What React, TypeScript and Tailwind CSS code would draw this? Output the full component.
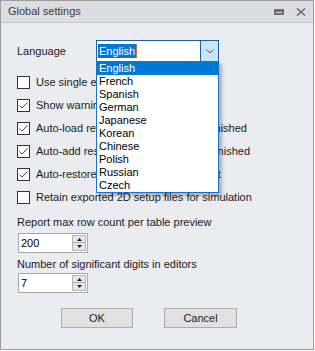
import { useState } from 'react';

const languages = ['English', 'French', 'Spanish', 'German', 'Japanese', 'Korean', 'Chinese', 'Polish', 'Russian', 'Czech'];

const options = [
  { label: 'Use single editor window', checked: false },
  { label: 'Show warnings on close', checked: true },
  { label: 'Auto-load results when simulations finished', checked: true },
  { label: 'Auto-add results when simulation is finished', checked: true },
  { label: 'Auto-restore last viewer layout at start', checked: true },
  { label: 'Retain exported 2D setup files for simulation', checked: false },
];

function Checkbox({ checked }: { checked: boolean }) {
  return (
    <div className="w-[13px] h-[13px] border border-[#333333] bg-white flex items-center justify-center shrink-0">
      {checked && (
        <svg width="11" height="11" viewBox="0 0 11 11">
          <path d="M1.5 5.5 L4 8 L9.5 2.5" fill="none" stroke="#4a4a4a" strokeWidth="1" />
        </svg>
      )}
    </div>
  );
}

function SpinBox({ value }: { value: string }) {
  return (
    <div className="w-[70px] h-[20px] border border-[#a8a8a8] bg-white flex items-center justify-between pl-[2px] pr-[1px]">
      <span className="text-[11px] leading-none text-black">{value}</span>
      <div className="flex flex-col w-[14px] h-[16px] gap-0">
        <div className="h-[8px] bg-[#e6e6e6] border border-[#b4b4b4] flex items-center justify-center">
          <svg width="5" height="3" viewBox="0 0 5 3"><path d="M0 3 L2.5 0 L5 3 Z" fill="#222" /></svg>
        </div>
        <div className="h-[8px] bg-[#e6e6e6] border border-t-0 border-[#b4b4b4] flex items-center justify-center">
          <svg width="5" height="3" viewBox="0 0 5 3"><path d="M0 0 L2.5 3 L5 0 Z" fill="#222" /></svg>
        </div>
      </div>
    </div>
  );
}

export default function App() {
  const [lang] = useState('English');

  return (
    <div className="w-[315px] h-[351px] bg-white" style={{ fontFamily: '"Liberation Sans", Arial, sans-serif' }}>
      <div className="relative w-[314px] h-[350px] border border-[#9c9c9c] bg-[#ebecf0] flex flex-col">
        {/* Title bar */}
        <div className="h-[22px] bg-[#dcdde2] border-b border-[#c4c5c9] flex items-center justify-between pl-[7px] pr-[7px] shrink-0">
          <span className="text-[11px] text-[#3a3a3a]">Global settings</span>
          <div className="flex items-center gap-[12px]">
            <div className="w-[10px] h-[6px] border-[2px] border-[#707070] border-t-[3px]" />
            <svg width="10" height="8" viewBox="0 0 10 8">
              <path d="M1 0.5 L9 7.5 M9 0.5 L1 7.5" stroke="#707070" strokeWidth="1.6" />
            </svg>
          </div>
        </div>

        <div className="flex flex-col pl-[16px] text-[11px] text-[#1a1a1a]">
          {/* Language */}
          <div className="flex items-center mt-[17px] h-[22px]">
            <span className="w-[79px]">Language</span>
            <div className="w-[123px] h-[22px] border border-[#1f5f9f] bg-white flex items-center">
              <div className="flex-1 pl-[1px] flex items-center">
                <span className="bg-[#0078d7] text-white px-[1px] leading-[14px]">{lang}</span>
                <span className="w-[1px] h-[14px] bg-[#d4782a]" />
              </div>
              <div className="w-[18px] h-full bg-[#cce4f7] border-l border-[#1f5f9f] flex items-center justify-center">
                <svg width="8" height="5" viewBox="0 0 8 5">
                  <path d="M0.5 0.5 L4 4 L7.5 0.5" fill="none" stroke="#555" strokeWidth="1" />
                </svg>
              </div>
            </div>
          </div>

          {/* Options */}
          <div className="flex flex-col mt-[9px]">
            {options.map((o) => (
              <div key={o.label} className="h-[23px] flex items-center gap-[6px]">
                <Checkbox checked={o.checked} />
                <span className="whitespace-nowrap">{o.label}</span>
              </div>
            ))}
          </div>

          <div className="mt-[6px] leading-[14px]">Report max row count per table preview</div>
          <div className="mt-[4px] pl-[1px]">
            <SpinBox value="200" />
          </div>
          <div className="mt-[4px] leading-[14px]">Number of significant digits in editors</div>
          <div className="mt-[2px] pl-[1px]">
            <SpinBox value="7" />
          </div>

          <div className="flex gap-[31px] mt-[15px] pl-[44px]">
            <button className="w-[72px] h-[20px] bg-[#e1e1e1] border border-[#adadad] text-[11px] text-[#1a1a1a]">OK</button>
            <button className="w-[73px] h-[20px] bg-[#e1e1e1] border border-[#adadad] text-[11px] text-[#1a1a1a]">Cancel</button>
          </div>
        </div>

        {/* Dropdown list */}
        <div className="absolute left-[95px] top-[60px] w-[123px] h-[132px] bg-white border border-[#1a73c8] shadow-[3px_3px_3px_rgba(0,0,0,0.25)] flex flex-col">
          {languages.map((l, i) => (
            <div
              key={l}
              className={`h-[13px] leading-[13px] pl-[2px] text-[11px] ${i === 0 ? 'bg-[#0078d7] text-white' : 'text-black'}`}
            >
              {l}
            </div>
          ))}
        </div>
      </div>
    </div>
  );
}
